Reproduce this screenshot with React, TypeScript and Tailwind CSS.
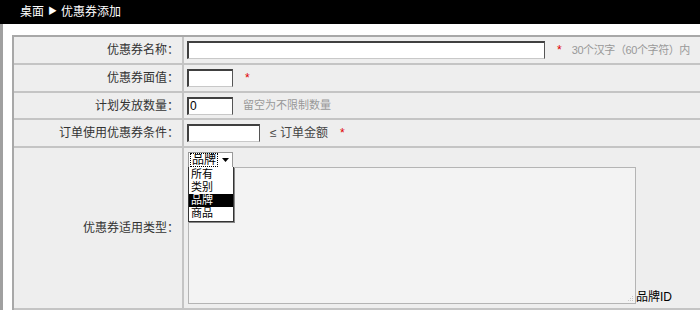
const font = "font-['Liberation_Sans','Noto_Sans_CJK_SC',sans-serif]";

function Field({ w, value }: { w: string; value?: string }) {
  return (
    <div
      className={`${w} h-[18px] shrink-0 bg-white border border-[#666] border-t-2 border-l-2 border-t-[#404040] border-l-[#404040] border-b-[#c8c8c8] border-r-[#555] text-[12px] leading-[14px] pl-[1px] text-black`}
    >
      {value}
    </div>
  );
}

function Row({ label, h = 'h-[28px]', children }: { label: string; h?: string; children: React.ReactNode }) {
  return (
    <div className={`flex ${h} border-b-2 border-[#c4c4c4]`}>
      <div className="w-[170px] shrink-0 flex items-center justify-end pr-[3px] border-r-2 border-[#c4c4c4] text-[#333]">
        {label}：
      </div>
      <div className="flex-1 flex items-center gap-[10px] pl-[3px] whitespace-nowrap">{children}</div>
    </div>
  );
}

const Star = () => <span className="text-[#e00000] text-[12px] ml-[2px]">*</span>;

export default function App() {
  const options = ['所有', '类别', '品牌', '商品'];
  return (
    <div className={`w-[700px] h-[310px] overflow-hidden bg-white text-[12px] ${font}`}>
      <div className="h-[24px] bg-black text-white flex items-center pl-[20px] gap-[4px]">
        <span>桌面</span>
        <span className="text-[9px]">▶</span>
        <span>优惠券添加</span>
      </div>
      <div className="border-l-[3px] border-[#a0a0a0] h-[286px] pt-[11px] pl-[9px]">
        <div className="border-t-2 border-l-2 border-[#a8a8a8] bg-[#eeeeee] h-[275px]">
          <Row label="优惠券名称">
            <Field w="w-[358px]" />
            <Star />
            <span className="text-[#999] text-[11px] tracking-[-0.4px]">30个汉字（60个字符）内</span>
          </Row>
          <Row label="优惠券面值">
            <Field w="w-[46px]" />
            <Star />
          </Row>
          <Row label="计划发放数量" h="h-[27px]">
            <Field w="w-[46px]" value="0" />
            <span className="text-[#999] text-[11px]">留空为不限制数量</span>
          </Row>
          <Row label="订单使用优惠券条件">
            <Field w="w-[73px]" />
            <span className="text-[#444]">≤ 订单金额</span>
            <Star />
          </Row>
          <div className="flex h-[162px] border-b-2 border-[#c4c4c4]">
            <div className="w-[170px] shrink-0 flex items-center justify-end pr-[3px] border-r-2 border-[#c4c4c4] text-[#333]">
              优惠券适用类型：
            </div>
            <div className="flex-1 pl-[4px] pt-[4px] relative">
              <div className="w-[45px] h-[16px] bg-white border border-[#999] flex items-center">
                <span className="border border-dotted border-black leading-[12px] px-[1px] ml-[1px] text-black">品牌</span>
                <span className="flex-1 flex justify-center">
                  <svg width="7" height="4" viewBox="0 0 7 4">
                    <path d="M0 0h7L3.5 4z" fill="#000" />
                  </svg>
                </span>
              </div>
              <div className="flex items-end -mt-[1px]">
                <div className="w-[448px] h-[137px] bg-[#f3f3f3] border border-[#b4b4b4] relative">
                  <svg className="absolute right-[1px] bottom-[1px]" width="8" height="8" viewBox="0 0 8 8">
                    <g fill="#c8c8c8">
                      <rect x="6" y="2" width="1" height="1" />
                      <rect x="4" y="4" width="1" height="1" />
                      <rect x="6" y="4" width="1" height="1" />
                      <rect x="2" y="6" width="1" height="1" />
                      <rect x="4" y="6" width="1" height="1" />
                      <rect x="6" y="6" width="1" height="1" />
                    </g>
                  </svg>
                </div>
                <span className="text-black leading-[12px] mb-[1px]">品牌ID</span>
              </div>
              <div className="absolute left-[4px] top-[19px] w-[46px] bg-white border border-[#333] border-t-0 text-black py-[1px] shadow-[1px_1px_0_#888]">
                {options.map(o => (
                  <div
                    key={o}
                    className={`h-[13px] leading-[13px] text-[11px] px-[2px] ${o === '品牌' ? 'bg-black text-white' : ''}`}
                  >
                    {o}
                  </div>
                ))}
              </div>
            </div>
          </div>
        </div>
      </div>
    </div>
  );
}
